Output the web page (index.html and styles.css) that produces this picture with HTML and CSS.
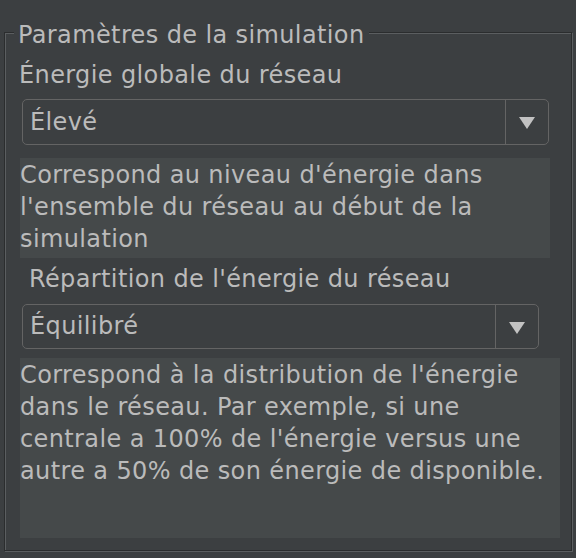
FILE: index.html
```html
<!DOCTYPE html>
<html lang="fr">
<head>
<meta charset="utf-8">
<title>Paramètres de la simulation</title>
<link rel="stylesheet" href="styles.css">
</head>
<body>
<fieldset class="group">
  <legend class="group-title">Paramètres de la simulation</legend>
  <div class="field-label label-a">Énergie globale du réseau</div>
  <div class="combo combo-a">
    <span class="combo-value">Élevé</span>
    <span class="combo-btn"><svg class="arrow" width="16" height="12" viewBox="0 0 16 12"><polygon points="0,0 16,0 8,12"/></svg></span>
  </div>
  <p class="desc desc-a">Correspond au niveau d'énergie dans l'ensemble du réseau au début de la simulation</p>
  <div class="field-label label-b">Répartition de l'énergie du réseau</div>
  <div class="combo combo-b">
    <span class="combo-value">Équilibré</span>
    <span class="combo-btn"><svg class="arrow" width="16" height="12" viewBox="0 0 16 12"><polygon points="0,0 16,0 8,12"/></svg></span>
  </div>
  <p class="desc desc-b">Correspond à la distribution de l'énergie dans le réseau. Par exemple, si une centrale a 100% de l'énergie versus une autre a 50% de son énergie de disponible.</p>
</fieldset>
</body>
</html>
```
FILE: styles.css
```css
html, body {
  margin: 0;
  padding: 0;
  background: #3c3f41;
}
body {
  width: 576px;
  height: 558px;
  overflow: hidden;
  font-family: "DejaVu Sans", sans-serif;
  font-size: 24px;
  letter-spacing: 0.38px;
  color: #bbbbbb;
}
.group {
  margin: 16px 4px 0 4px;
  padding: 10px 0 12px 9px;
  border: 1px solid #2b2d2e;
  box-shadow: inset 1px 1px 0 #5b5e60, 1px 1px 0 #5b5e60;
  min-width: 0;
}
.group-title {
  padding: 5px 5px 0 4px;
  line-height: 28px;
  background: #3c3f41;
}
.field-label {
  line-height: 32px;
}
.label-a { margin-left: 5px; }
.label-b { margin: 5px 0 0 15px; }
.combo {
  display: flex;
  border: 1px solid #646464;
  border-radius: 5px;
  background: #3c3f41;
}
.combo-a { margin: 8px 22px 0 8px; height: 44px; }
.combo-b { margin: 9px 32px 0 8px; height: 43px; }
.combo-value {
  flex: 1;
  padding-left: 7px;
}
.combo-a .combo-value { line-height: 44px; }
.combo-b .combo-value { line-height: 43px; }
.combo-btn {
  width: 43px;
  border-left: 1px solid #646464;
  display: flex;
  align-items: center;
  justify-content: center;
  padding-top: 2px;
  box-sizing: border-box;
}
.arrow { fill: #c2c2c2; display: block; }
.desc {
  margin: 0;
  background: #45494a;
  line-height: 32px;
  padding: 1px 0 0 0;
  box-sizing: border-box;
}
.desc-a { margin: 13px 21px 0 6px; height: 100px; }
.desc-b { margin: 9px 11px 0 6px; height: 180px; }
```
